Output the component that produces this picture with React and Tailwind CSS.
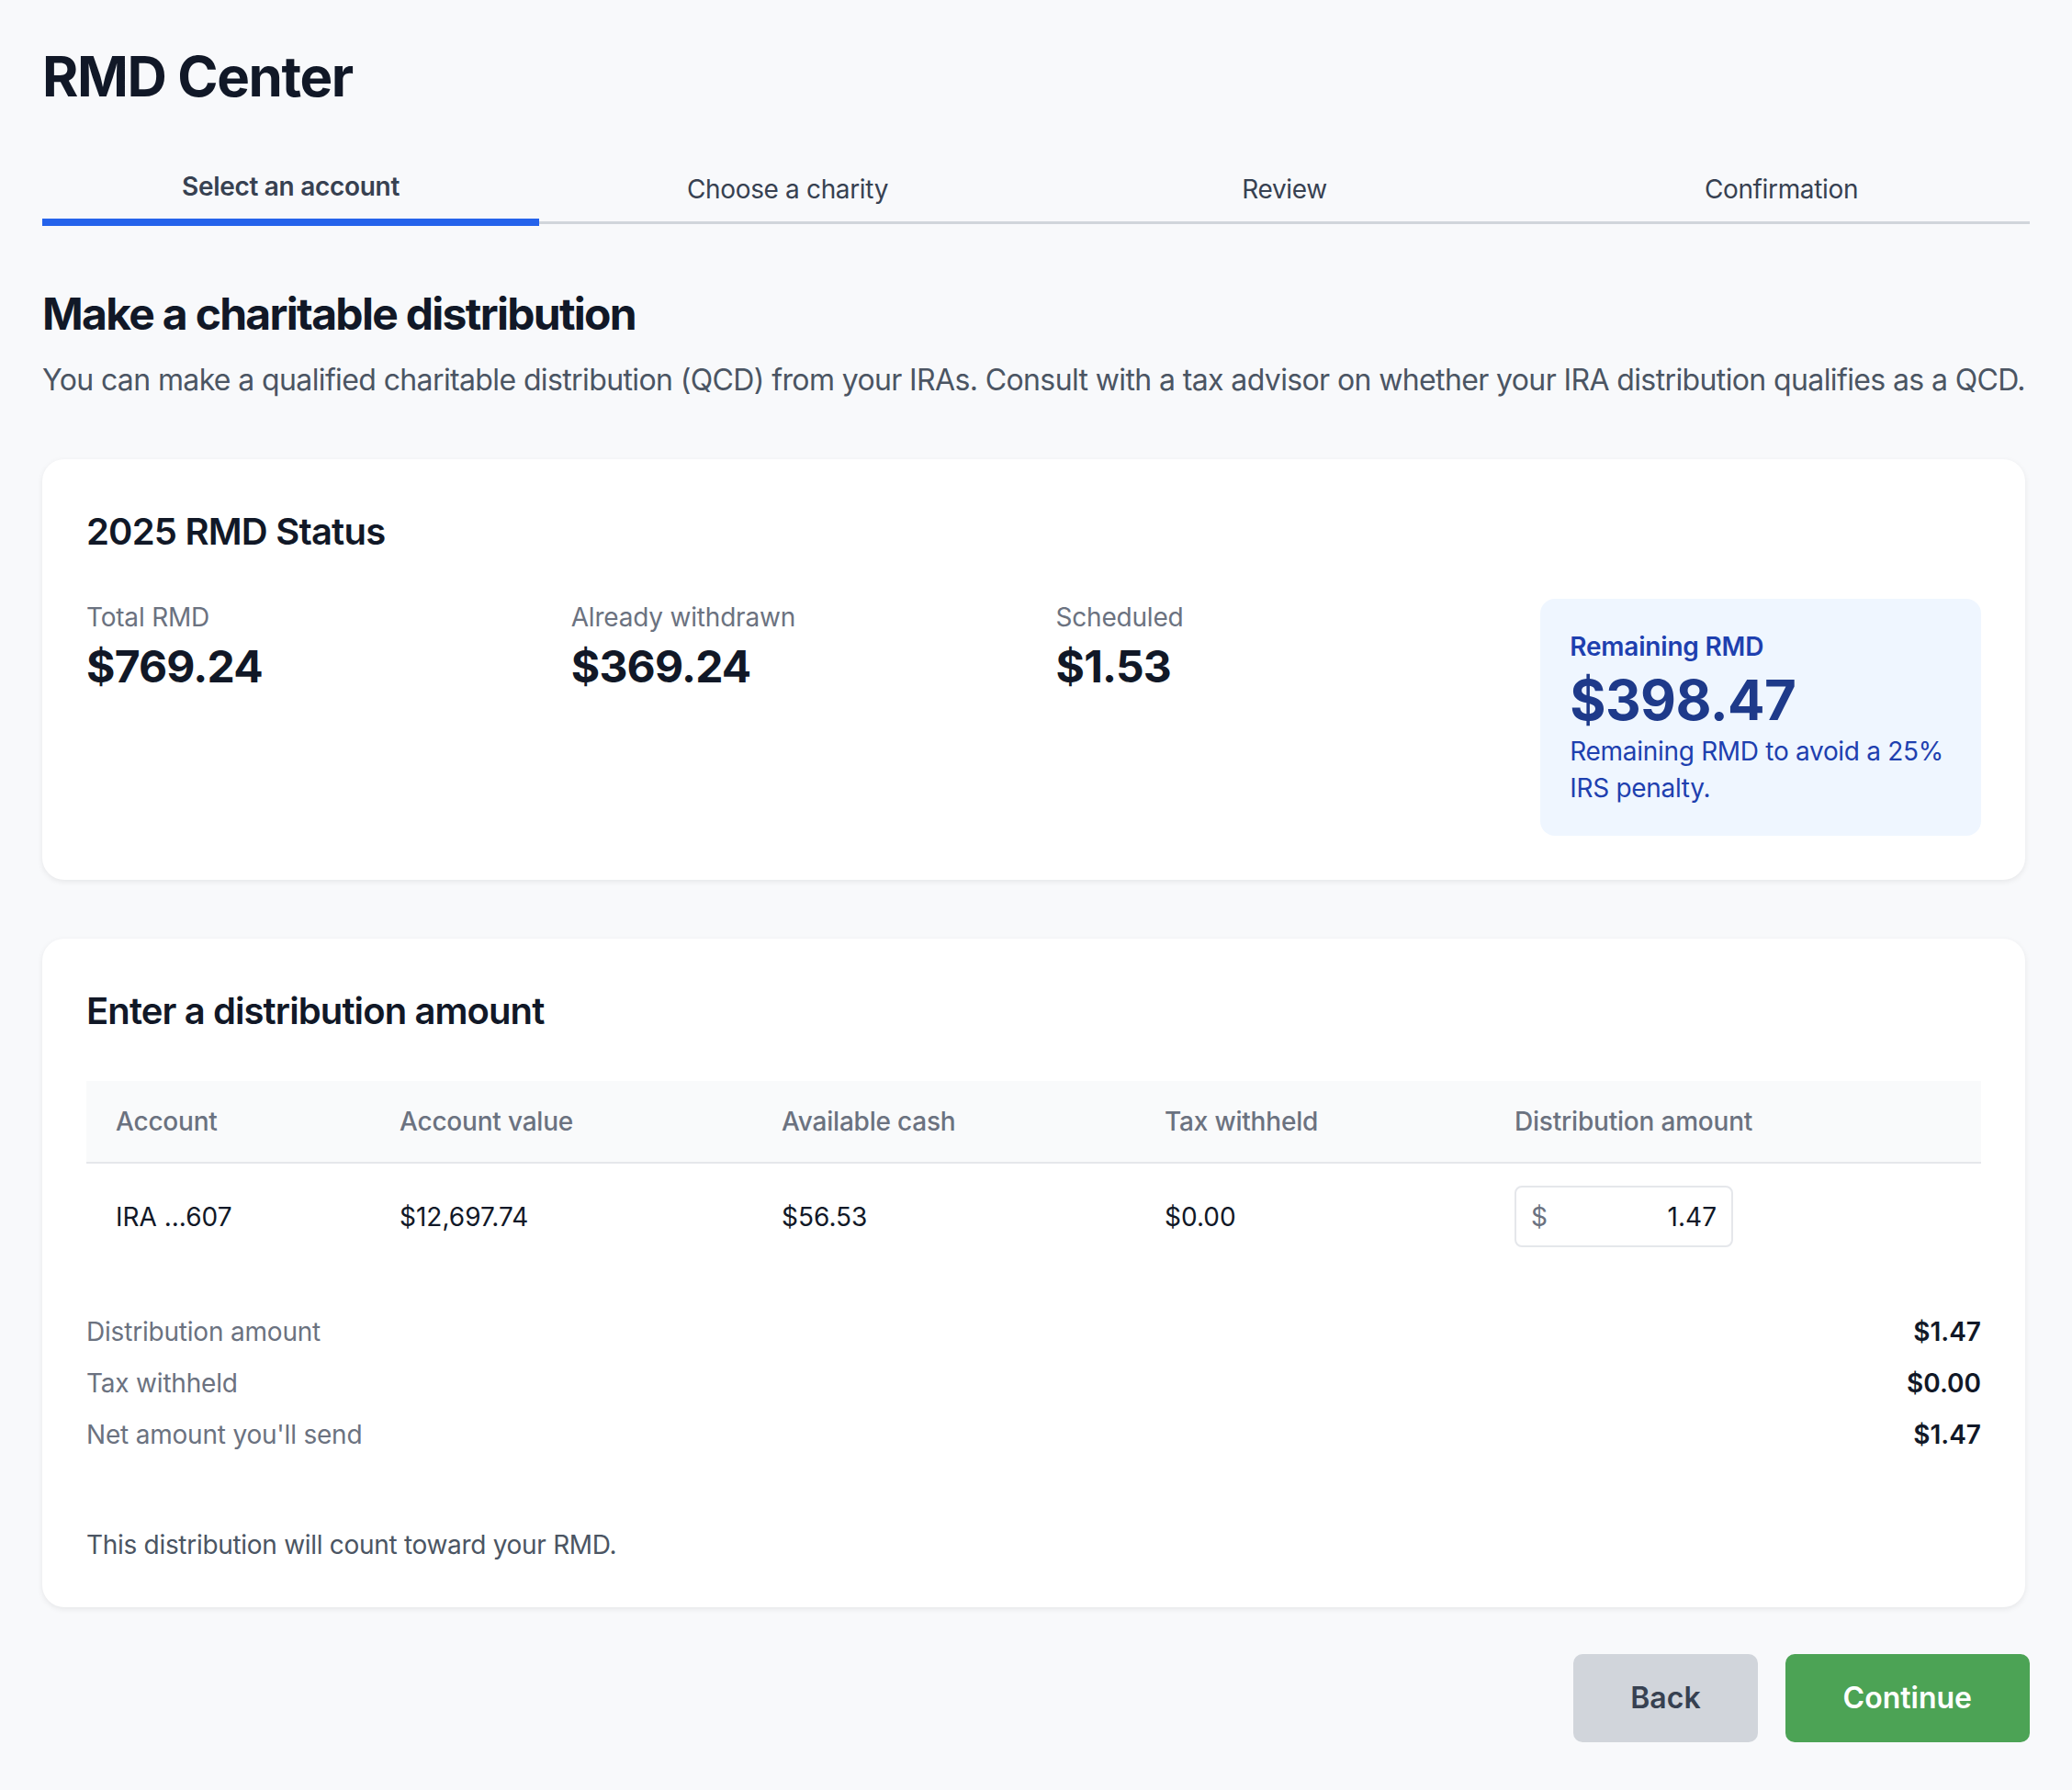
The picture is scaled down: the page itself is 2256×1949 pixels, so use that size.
import React from 'react'

const tabs = ['Select an account', 'Choose a charity', 'Review', 'Confirmation']

const stats = [
  { label: 'Total RMD', value: '$769.24' },
  { label: 'Already withdrawn', value: '$369.24' },
  { label: 'Scheduled', value: '$1.53' },
]

const summary = [
  { label: 'Distribution amount', value: '$1.47' },
  { label: 'Tax withheld', value: '$0.00' },
  { label: "Net amount you'll send", value: '$1.47' },
]

export default function App() {
  return (
    <div
      className="min-h-screen bg-[#f8f9fb] px-[46px] pt-[47px] pb-[54px] text-[#111827]"
      style={{ fontFamily: 'Inter, "Noto Sans", sans-serif' }}
    >
      <h1 className="text-[60px] leading-[72px] font-bold tracking-[-1.4px]">RMD Center</h1>

      {/* шаги */}
      <div className="mt-[64px] flex">
        {tabs.map((t, i) =>
          i === 0 ? (
            <div key={t} className="flex flex-1 flex-col">
              <div className="h-[40px] text-center text-[28px] leading-[40px] font-semibold text-[#374151] tracking-[-0.3px]">{t}</div>
              <div className="mt-[15px] h-[8px] bg-[#2563eb]" />
            </div>
          ) : (
            <div key={t} className="flex flex-1 flex-col pt-[3px]">
              <div className="h-[40px] text-center text-[28px] leading-[40px] text-[#374151] tracking-[-0.35px]">{t}</div>
              <div className="mt-[15px] h-[3px] bg-[#d1d5db]" />
              <div className="h-[2px]" />
            </div>
          )
        )}
      </div>

      <h2 className="mt-[64px] text-[48px] leading-[64px] font-bold tracking-[-1.7px]">Make a charitable distribution</h2>
      <p className="mt-[16px] text-[32px] leading-[48px] text-[#4b5563] tracking-[-0.62px] whitespace-nowrap">
        You can make a qualified charitable distribution (QCD) from your IRAs. Consult with a tax advisor on whether your IRA distribution qualifies as a QCD.
      </p>

      {/* статус RMD */}
      <div className="mt-[62px] mr-[5px] rounded-[24px] bg-white p-[48px] shadow-[0_2px_6px_rgba(0,0,0,0.08)]">
        <h3 className="mt-[3px] text-[40px] leading-[56px] font-semibold tracking-[-0.8px]">2025 RMD Status</h3>
        <div className="mt-[45px] grid grid-cols-4 gap-[48px] items-start">
          {stats.map(s => (
            <div key={s.label}>
              <div className="text-[28px] leading-[40px] text-[#6b7280] tracking-[-0.2px]">{s.label}</div>
              <div className="mt-[2px] text-[48px] leading-[64px] font-bold tracking-[-0.8px]">{s.value}</div>
            </div>
          ))}
          <div className="rounded-[16px] bg-[#eff6ff] p-[32px]">
            <div className="text-[28px] leading-[40px] font-semibold text-[#1e40af] tracking-[-0.2px]">Remaining RMD</div>
            <div className="mt-[2px] text-[60px] leading-[72px] font-bold text-[#1e3a8a] tracking-[-0.6px]">$398.47</div>
            <div className="text-[28px] leading-[40px] text-[#1e40af] tracking-[-0.3px]">
              Remaining RMD to avoid a 25%<br />IRS penalty.
            </div>
          </div>
        </div>
      </div>

      {/* сумма распределения */}
      <div className="mt-[64px] mr-[5px] rounded-[24px] bg-white p-[48px] shadow-[0_2px_6px_rgba(0,0,0,0.08)]">
        <h3 className="mt-[3px] text-[40px] leading-[56px] font-semibold tracking-[-0.9px]">Enter a distribution amount</h3>

        <table className="mt-[48px] w-full table-fixed border-collapse text-[28px] leading-[40px]">
          <thead>
            <tr className="bg-[#f9fafb] border-b-2 border-[#e5e7eb]">
              <th className="w-[309px] px-[32px] py-[24px] text-left font-medium text-[#6b7280] tracking-[-0.2px]">Account</th>
              <th className="w-[416px] px-[32px] py-[24px] text-left font-medium text-[#6b7280] tracking-[-0.2px]">Account value</th>
              <th className="w-[417px] px-[32px] py-[24px] text-left font-medium text-[#6b7280] tracking-[-0.2px]">Available cash</th>
              <th className="w-[381px] px-[32px] py-[24px] text-left font-medium text-[#6b7280] tracking-[-0.2px]">Tax withheld</th>
              <th className="px-[32px] py-[24px] text-left font-medium text-[#6b7280] tracking-[-0.2px]">Distribution amount</th>
            </tr>
          </thead>
          <tbody>
            <tr>
              <td className="px-[32px] py-[24px] text-[#111827]">IRA ...607</td>
              <td className="px-[32px] py-[24px] text-[#111827]">$12,697.74</td>
              <td className="px-[32px] py-[24px] text-[#111827]">$56.53</td>
              <td className="px-[32px] py-[24px] text-[#111827]">$0.00</td>
              <td className="px-[32px] py-[24px]">
                <div className="flex h-[67px] w-[238px] items-center rounded-[8px] border-2 border-[#e5e7eb] px-[16px]">
                  <span className="text-[#6b7280]">$</span>
                  <input
                    readOnly
                    value="1.47"
                    className="ml-[8px] w-full bg-transparent text-right text-[28px] text-[#111827] outline-none"
                  />
                </div>
              </td>
            </tr>
          </tbody>
        </table>

        <div className="mt-[48px] space-y-[16px] text-[28px] leading-[40px]">
          {summary.map(r => (
            <div key={r.label} className="flex justify-between">
              <span className="text-[#6b7280] tracking-[-0.2px]">{r.label}</span>
              <span className="font-semibold text-[#111827]">{r.value}</span>
            </div>
          ))}
        </div>

        <p className="mt-[80px] text-[28px] leading-[40px] text-[#4b5563] tracking-[-0.3px]">This distribution will count toward your RMD.</p>
      </div>

      <div className="mt-[51px] flex justify-end gap-[30px]">
        <button className="rounded-[10px] bg-[#d1d5db] px-[62px] py-[24px] text-[32px] leading-[48px] font-semibold text-[#374151]">
          Back
        </button>
        <button className="rounded-[10px] bg-[#4ca355] px-[63px] py-[24px] text-[32px] leading-[48px] font-semibold text-white">
          Continue
        </button>
      </div>
    </div>
  )
}
